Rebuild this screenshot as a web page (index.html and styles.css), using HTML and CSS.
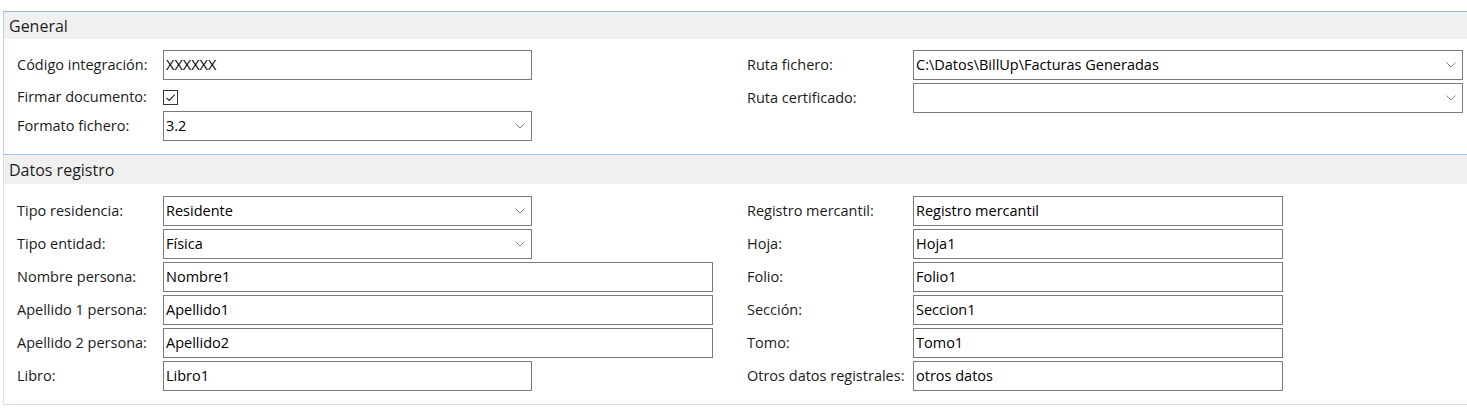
FILE: index.html
```html
<!DOCTYPE html>
<html lang="es">
<head>
<meta charset="utf-8">
<title>Configuración</title>
<link rel="stylesheet" href="styles.css">
</head>
<body>
<div class="page">
  <section class="panel panel-general">
    <div class="panel-header header-general">General</div>
    <div class="panel-body">
      <div class="col col-left">
        <span class="label">Código integración:</span>
        <div class="field w-short">XXXXXX</div>
        <span class="label label-check">Firmar documento:</span>
        <div class="check-cell">
          <span class="checkbox">
            <svg width="13" height="13" viewBox="0 0 13 13"><path d="M2.5 6.8 L5.2 9.5 L10.8 3.6" fill="none" stroke="#222" stroke-width="1.1"/></svg>
          </span>
        </div>
        <span class="label">Formato fichero:</span>
        <div class="field select w-short"><span>3.2</span><svg class="chev" width="10" height="6" viewBox="0 0 10 6"><path d="M0.5 0.5 L5 5 L9.5 0.5" fill="none" stroke="#777" stroke-width="0.9"/></svg></div>
      </div>
      <div class="col col-right">
        <span class="label">Ruta fichero:</span>
        <div class="field select w-long"><span>C:\Datos\BillUp\Facturas Generadas</span><svg class="chev" width="10" height="6" viewBox="0 0 10 6"><path d="M0.5 0.5 L5 5 L9.5 0.5" fill="none" stroke="#777" stroke-width="0.9"/></svg></div>
        <span class="label">Ruta certificado:</span>
        <div class="field select w-long"><span></span><svg class="chev" width="10" height="6" viewBox="0 0 10 6"><path d="M0.5 0.5 L5 5 L9.5 0.5" fill="none" stroke="#777" stroke-width="0.9"/></svg></div>
      </div>
    </div>
  </section>
  <section class="panel panel-datos">
    <div class="panel-header header-datos">Datos registro</div>
    <div class="panel-body">
      <div class="col col-left">
        <span class="label">Tipo residencia:</span>
        <div class="field select w-short"><span>Residente</span><svg class="chev" width="10" height="6" viewBox="0 0 10 6"><path d="M0.5 0.5 L5 5 L9.5 0.5" fill="none" stroke="#777" stroke-width="0.9"/></svg></div>
        <span class="label">Tipo entidad:</span>
        <div class="field select w-short"><span>Física</span><svg class="chev" width="10" height="6" viewBox="0 0 10 6"><path d="M0.5 0.5 L5 5 L9.5 0.5" fill="none" stroke="#777" stroke-width="0.9"/></svg></div>
        <span class="label">Nombre persona:</span>
        <div class="field w-long">Nombre1</div>
        <span class="label">Apellido 1 persona:</span>
        <div class="field w-long">Apellido1</div>
        <span class="label">Apellido 2 persona:</span>
        <div class="field w-long">Apellido2</div>
        <span class="label">Libro:</span>
        <div class="field w-short">Libro1</div>
      </div>
      <div class="col col-right">
        <span class="label">Registro mercantil:</span>
        <div class="field w-mid">Registro mercantil</div>
        <span class="label">Hoja:</span>
        <div class="field w-mid">Hoja1</div>
        <span class="label">Folio:</span>
        <div class="field w-mid">Folio1</div>
        <span class="label">Sección:</span>
        <div class="field w-mid">Seccion1</div>
        <span class="label">Tomo:</span>
        <div class="field w-mid">Tomo1</div>
        <span class="label">Otros datos registrales:</span>
        <div class="field w-mid">otros datos</div>
      </div>
    </div>
  </section>
</div>
</body>
</html>
```

FILE: styles.css
```css
html, body {
  margin: 0;
  padding: 0;
  background: #ffffff;
  overflow: hidden;
}
body {
  font-family: "Open Sans", "Noto Sans", sans-serif;
  color: #1b1b1b;
  font-size: 14.5px;
}
.page {
  padding-top: 11px;
  padding-left: 3px;
  width: 1480px;
}
.panel {
  border-left: 1px solid #c9dcf0;
}
.panel-general {
  border-top: 1px solid #94bbe8;
  border-bottom: 1px solid #9fc2ea;
  border-left-color: #b9d2ee;
}
.panel-datos {
  border-bottom: 1px solid #d6e1ea;
  border-left-color: #d6e1ea;
}
.panel-header {
  background: #f0f0f0;
  font-size: 16px;
  color: #1e1e1e;
  padding-left: 5px;
  display: flex;
  align-items: center;
}
.header-general {
  height: 27px;
}
.header-datos {
  height: 29px;
}
.panel-body {
  display: flex;
  gap: 34px;
  padding-left: 13px;
}
.panel-general .panel-body {
  padding-top: 11px;
  padding-bottom: 13px;
}
.panel-datos .panel-body {
  padding-top: 12px;
  padding-bottom: 13px;
}
.col {
  display: grid;
  row-gap: 3px;
  align-items: center;
  align-content: start;
}
.col-left {
  grid-template-columns: 146px 550px;
}
.col-right {
  grid-template-columns: 166px 550px;
}
.label {
  white-space: nowrap;
  color: #1b1b1b;
  line-height: 20px;
}
.field {
  box-sizing: border-box;
  height: 30px;
  border: 1px solid #7a7a7a;
  padding: 0 3px 0 2px;
  line-height: 28px;
  color: #000;
  white-space: nowrap;
}
.w-short { width: 369px; }
.w-mid { width: 370px; }
.w-long { width: 550px; }
.select {
  display: flex;
  align-items: center;
  justify-content: space-between;
  padding-right: 6px;
}
.chev {
  flex: none;
}
.check-cell {
  height: 25px;
  display: flex;
  align-items: flex-start;
  padding-top: 7px;
  box-sizing: border-box;
}
.checkbox {
  box-sizing: border-box;
  width: 15px;
  height: 15px;
  border: 1px solid #333;
  display: flex;
  align-items: center;
  justify-content: center;
}
.label-check {
  padding-top: 3px;
}
```
